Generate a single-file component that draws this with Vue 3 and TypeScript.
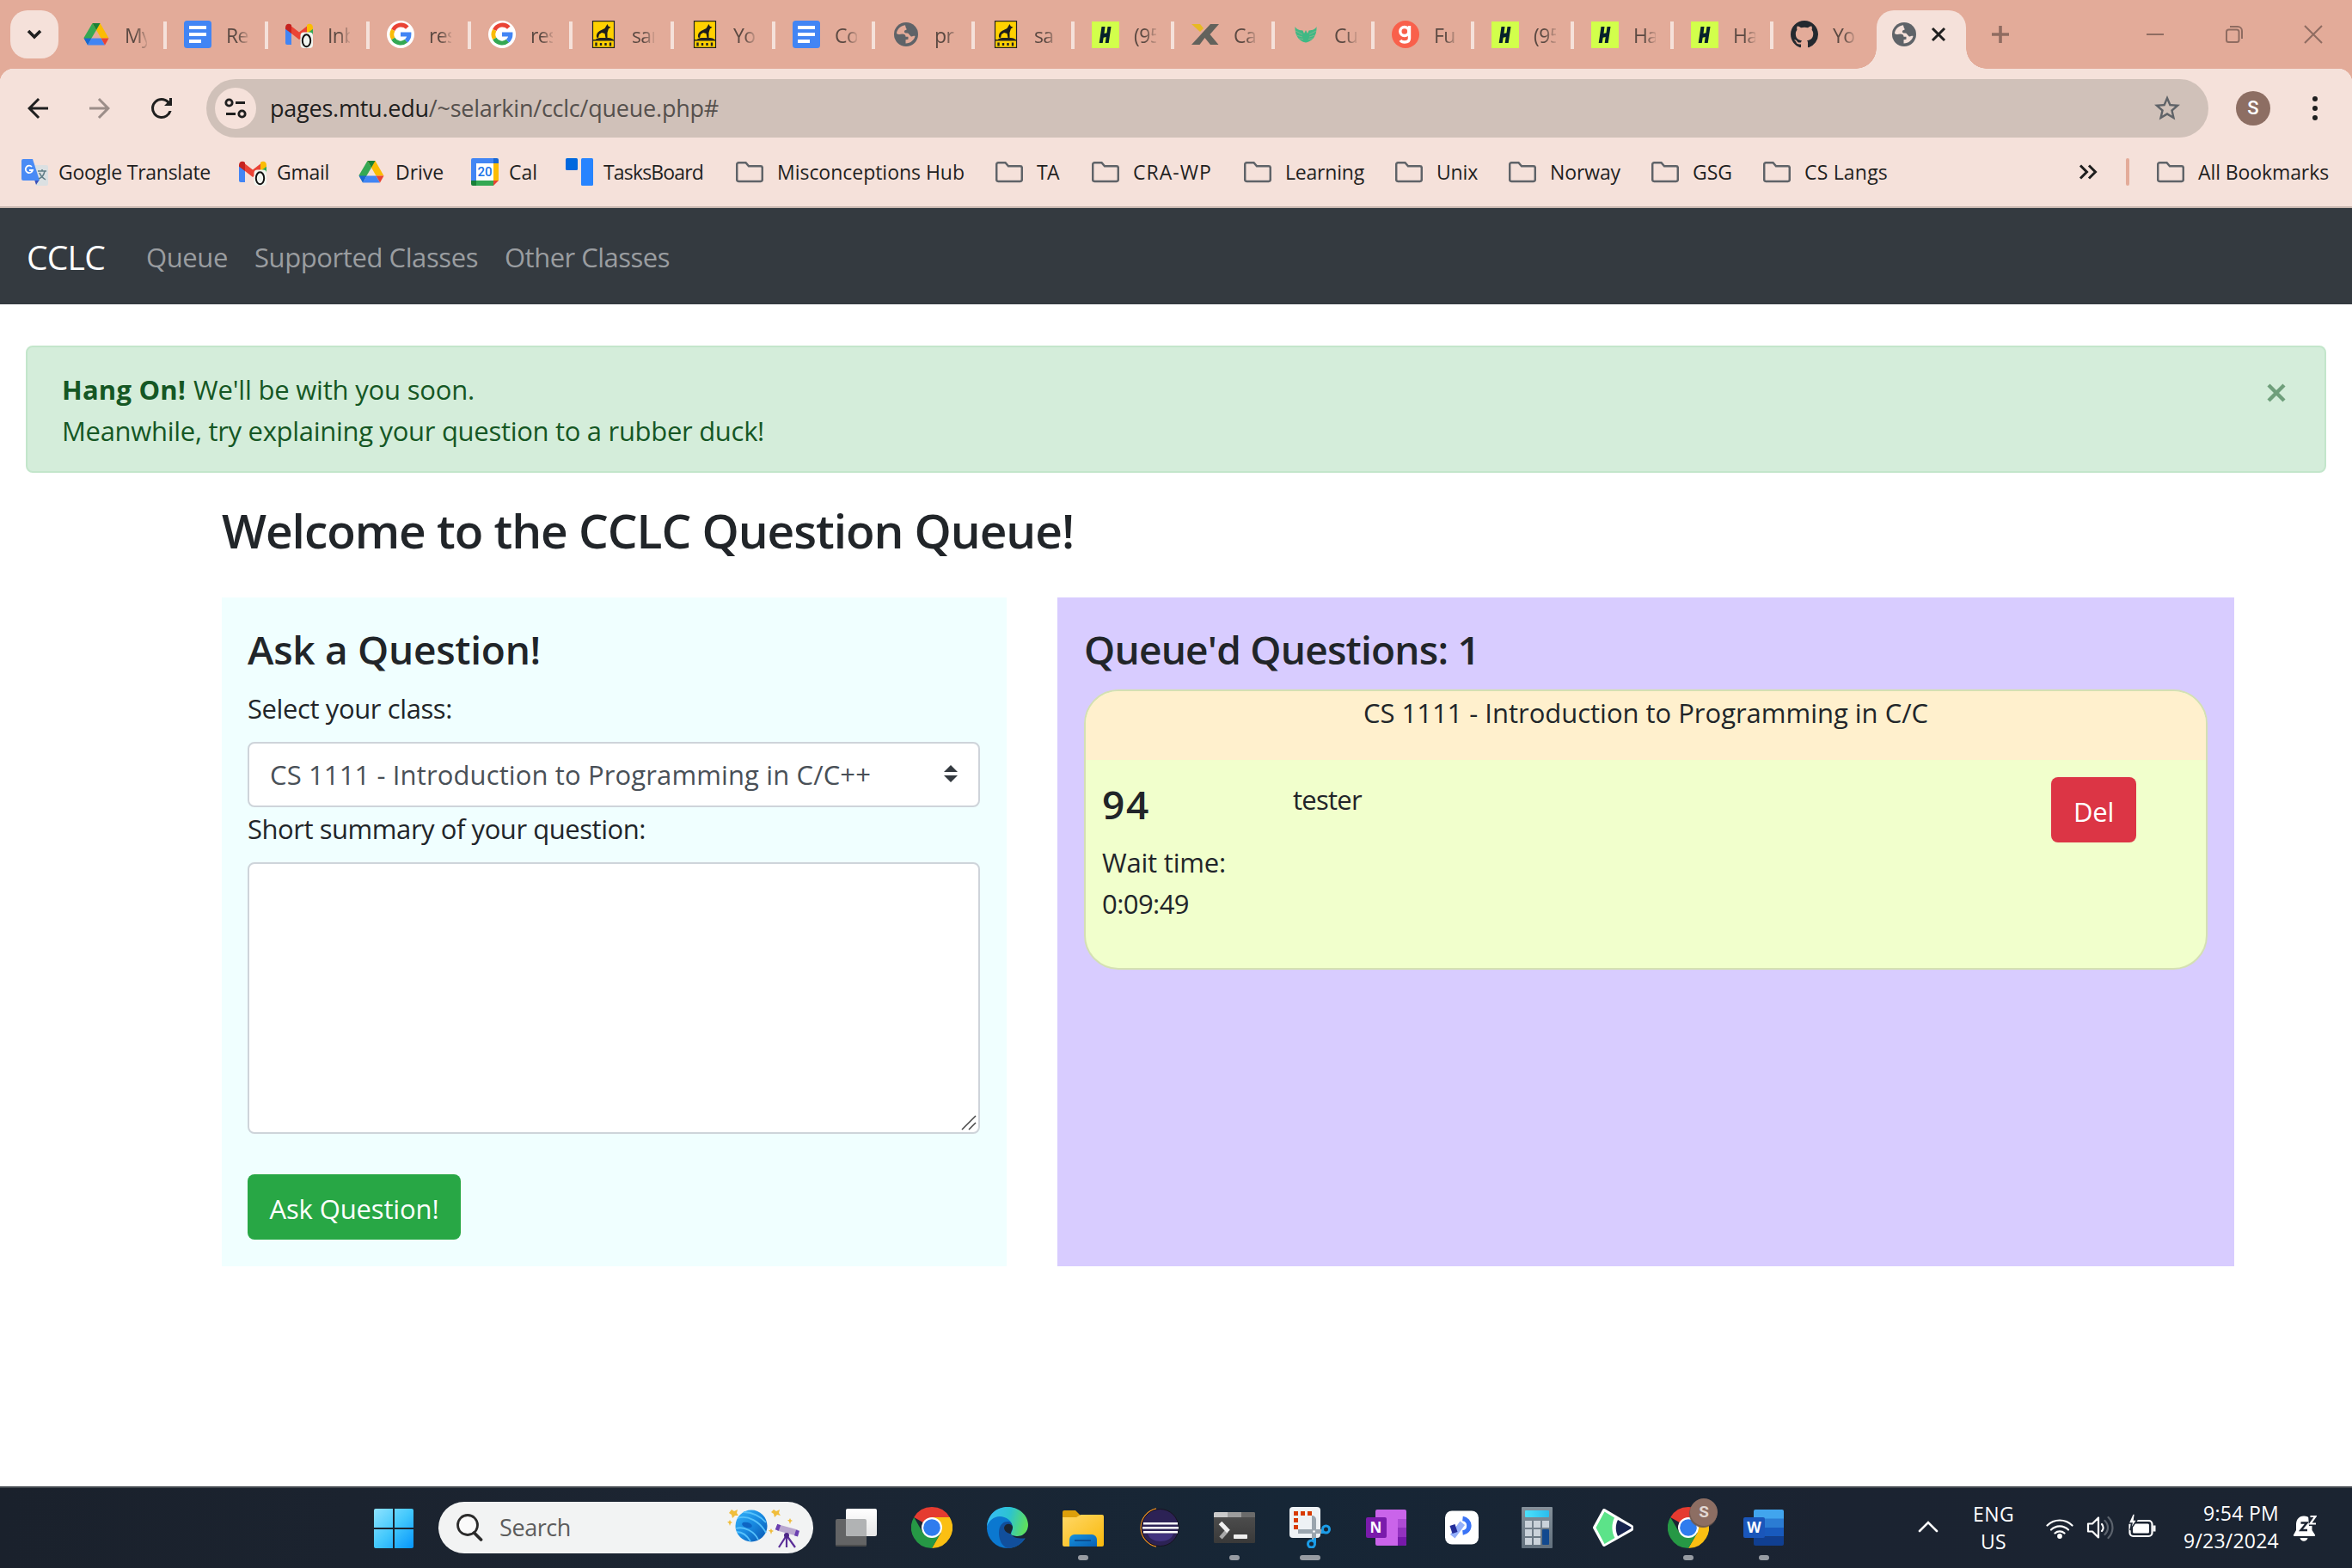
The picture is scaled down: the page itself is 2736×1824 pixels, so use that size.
<script setup lang="ts">
import type { Directive } from 'vue'

interface Tab { icon: string; title: string; width: number }
interface Bookmark { icon: string; label: string; cell: number; text: number }
interface App { icon: string; bar?: number; letter?: string }

// Spreads the letters of a single-line label so that it takes up the given width.
const vFit: Directive<HTMLElement, number> = {
  mounted(el, { value }) {
    const range = document.createRange()
    range.selectNodeContents(el)
    const natural = range.getBoundingClientRect().width
    const count = (el.textContent ?? '').length
    if (count > 0) el.style.letterSpacing = `${((value - natural) / count).toFixed(3)}px`
  },
}

const tabs: Tab[] = [
  { icon: 'drive', title: 'My D', width: 118 },
  { icon: 'docs', title: 'Re', width: 118 },
  { icon: 'gmail', title: 'Inb', width: 118 },
  { icon: 'google', title: 'res', width: 118 },
  { icon: 'google', title: 'res', width: 118 },
  { icon: 'husky', title: 'sam', width: 118 },
  { icon: 'husky', title: 'Yo', width: 118 },
  { icon: 'docs', title: 'Co', width: 116 },
  { icon: 'globe', title: 'pr', width: 116 },
  { icon: 'husky', title: 'sa', width: 116 },
  { icon: 'hand', title: '(95', width: 116 },
  { icon: 'xmark', title: 'Ca', width: 117 },
  { icon: 'wings', title: 'Cu', width: 116 },
  { icon: 'gred', title: 'Fu', width: 116 },
  { icon: 'hand', title: '(95', width: 116 },
  { icon: 'hand', title: 'Ha', width: 116 },
  { icon: 'hand', title: 'Ha', width: 116 },
  { icon: 'github', title: 'Yo', width: 120 },
]

const bookmarks: Bookmark[] = [
  { icon: 'translate', label: 'Google Translate', cell: 254, text: 177 },
  { icon: 'gmail', label: 'Gmail', cell: 138, text: 61 },
  { icon: 'drive', label: 'Drive', cell: 132, text: 56 },
  { icon: 'cal', label: 'Cal', cell: 110, text: 33 },
  { icon: 'tasks', label: 'TasksBoard', cell: 198, text: 116 },
  { icon: 'folder', label: 'Misconceptions Hub', cell: 302, text: 218 },
  { icon: 'folder', label: 'TA', cell: 112, text: 26 },
  { icon: 'folder', label: 'CRA-WP', cell: 177, text: 92 },
  { icon: 'folder', label: 'Learning', cell: 176, text: 92 },
  { icon: 'folder', label: 'Unix', cell: 132, text: 48 },
  { icon: 'folder', label: 'Norway', cell: 166, text: 82 },
  { icon: 'folder', label: 'GSG', cell: 130, text: 46 },
  { icon: 'folder', label: 'CS Langs', cell: 200, text: 97 },
]

const apps: App[] = [
  { icon: 'taskview' },
  { icon: 'chrome' },
  { icon: 'edge' },
  { icon: 'explorer', bar: 12 },
  { icon: 'eclipse' },
  { icon: 'terminal', bar: 12 },
  { icon: 'snip', bar: 24 },
  { icon: 'onenote', letter: 'N' },
  { icon: 'pdapp' },
  { icon: 'calc' },
  { icon: 'clip' },
  { icon: 'chromeS', bar: 12 },
  { icon: 'word', bar: 12, letter: 'W' },
]
</script>

<template>
  <div class="screen">
    <svg class="sprite" width="0" height="0" aria-hidden="true">
      <defs>
        <linearGradient id="gWin" x1="0" y1="0" x2="1" y2="1"><stop offset="0" stop-color="#8fe3ff" /><stop offset=".5" stop-color="#43c8fc" /><stop offset="1" stop-color="#0696fb" /></linearGradient>
        <linearGradient id="gFold" x1="0" y1="0" x2="1" y2="1"><stop offset="0" stop-color="#ffd867" /><stop offset="1" stop-color="#f9b90c" /></linearGradient>
        <linearGradient id="gTab" x1="0" y1="0" x2="1" y2="1"><stop offset="0" stop-color="#1792dd" /><stop offset="1" stop-color="#0860b4" /></linearGradient>
        <linearGradient id="gEdge" x1="0" y1=".4" x2="1" y2=".6"><stop offset="0" stop-color="#37bdf5" /><stop offset=".5" stop-color="#2cc3d0" /><stop offset="1" stop-color="#62e155" /></linearGradient>
        <linearGradient id="gPlanet" x1="0" y1="0" x2="1" y2="1"><stop offset="0" stop-color="#36b4fb" /><stop offset=".5" stop-color="#1889e0" /><stop offset="1" stop-color="#0a55b0" /></linearGradient>
        <linearGradient id="gTerm" x1="0" y1="0" x2="0" y2="1"><stop offset="0" stop-color="#505050" /><stop offset="1" stop-color="#393939" /></linearGradient>
        <linearGradient id="gPaper" x1="0" y1="0" x2="0" y2="1"><stop offset="0" stop-color="#ffffff" /><stop offset="1" stop-color="#e6e6e6" /></linearGradient>
        <linearGradient id="gCalc" x1="0" y1="0" x2="0" y2="1"><stop offset="0" stop-color="#84909a" /><stop offset="1" stop-color="#62707d" /></linearGradient>
        <linearGradient id="gCalcTop" x1="0" y1="0" x2="1" y2="0"><stop offset="0" stop-color="#4be2fc" /><stop offset="1" stop-color="#2bbcec" /></linearGradient>
      </defs>
      <symbol id="i-drive" viewBox="0 0 32 32">
        <path d="M11.500 3 1.500 20 6 28 16 11z" fill="#34a853" />
        <path d="M20.500 3H11.500L21.500 20.500H30.500z" fill="#fbbc04" /><path d="M11.500 3h9L16 11z" fill="#188038" />
        <path d="M1.500 20.500h9L6 28.500z" fill="#1967d2" /><path d="M10.500 20.500h11L26 28.500H6z" fill="#4285f4" /><path d="M21.500 20.500h9L26 28.500z" fill="#ea4335" />
      </symbol>
      <symbol id="i-docs" viewBox="0 0 32 32"><rect width="32" height="32" rx="3.500" fill="#4285f4" /><path d="M6 6h20v4H6zM6 14h20v4H6zM6 22h14v4H6z" fill="#fff" /></symbol>
      <symbol id="i-gmail" viewBox="0 0 32 32">
        <path d="M0 8v18a2 2 0 0 0 2 2h5V13z" fill="#4285f4" /><path d="M25 13v15h5a2 2 0 0 0 2-2V8z" fill="#34a853" />
        <path d="M7 6.500 16 13.500 25 6.500V15L16 22 7 15z" fill="#ea4335" /><path d="M0 8C0 4 4 2.500 7 5V15L0 9.800z" fill="#c5221f" /><path d="M32 8c0-4-4-5.500-7-3V15l7-5.200z" fill="#fbbc04" />
        <rect x="17.500" y="13.500" width="14.500" height="18.500" rx="4" fill="#f1f5ef" /><ellipse cx="24.500" cy="23.300" rx="4.700" ry="7" fill="none" stroke="#111" stroke-width="2" />
      </symbol>
      <symbol id="i-google" viewBox="0 0 32 32">
        <circle cx="16" cy="16" r="16" fill="#fff" />
        <g fill="none" stroke-width="4.800"><path d="M23.800 8.200A10 10 0 0 0 7.300 11" stroke="#ea4335" /><path d="M7.300 11a10 10 0 0 0 0 10" stroke="#fbbc05" /><path d="M7.300 21A10 10 0 0 0 22.500 23.700" stroke="#34a853" /><path d="M22.500 23.700A10 10 0 0 0 26 16H16" stroke="#4285f4" /></g>
      </symbol>
      <symbol id="i-husky" viewBox="0 0 32 32">
        <rect x="3.500" y=".6" width="25" height="30.800" fill="#ffd100" stroke="#222" stroke-width="1.200" />
        <path d="M4 22h24v1.500H4z" fill="#222" /><path d="M7 22c0-1 3-2 6-2h8c3 0 6 1 6 2z" fill="#222" />
        <path d="M8 19.500c-.5-3 .5-6 3.500-7.500l6-3 3-5 1.200 2.500 2.800 1.300-2.600 1.700-1.400 4.500v6h-2l-1-5-3.500-1-3 2-1 4z" fill="#1c1c1c" />
        <path d="M7.500 25.500v4M13 26v3M18.500 26v3M24 25.500v4" fill="none" stroke="#222" stroke-width="2.400" />
      </symbol>
      <symbol id="i-globe" viewBox="0 0 32 32">
        <circle cx="16" cy="16" r="14" fill="#5f6368" />
        <path d="M15 5.200C9 6 5.200 10.500 5 15c2 1.600 4.500 1 6.500.6 2.500 0 4 1 4 3.200h3v3l-3 .5V26.500c6-.2 10-4 11-8.500-2-.8-3 1.200-5 .2l-3-3.500c-1.800-.4-3.500.2-4.500-1.200-.6-1.600.8-2.600 2.400-2.800.8-1.200-.6-2-.8-3z" fill="var(--hole, #e3ab99)" />
      </symbol>
      <symbol id="i-hand" viewBox="0 0 32 32"><rect y="1" width="32" height="31" fill="#d2ff4b" /><path d="M11.500 7h4l-1 8 3-.7 1-7.300h4l-2.800 19h-4l1-7-3 .7-1 6.300h-4z" fill="#06222b" /></symbol>
      <symbol id="i-xmark" viewBox="0 0 32 32"><path d="M22 4h10L21.500 16 31.500 28H22l-6.500-8L9.500 28H0z" fill="#62625c" /><path d="M0 4h10l4 5-4 4z" fill="#e8b923" /></symbol>
      <symbol id="i-wings" viewBox="0 0 32 32"><path d="M3.500 7c2 4 6 4 9 4.500L14 15l2-4 2 4 1.500-3.500c3-.5 7-.5 9-4.500.5 8-3 17-12.500 18.500C6.500 24 3 15 3.500 7z" fill="#3fb984" /><path d="M4 12l8 4M5 17l7 2M8 21l5 .5M28 12l-8 4M27 17l-7 2M24 21l-5 .5" stroke="#8fb592" stroke-width=".8" /></symbol>
      <symbol id="i-gred" viewBox="0 0 32 32"><circle cx="16" cy="16" r="16" fill="#f9604b" /><g fill="none" stroke="#fff" stroke-width="3.400"><circle cx="14.800" cy="12.500" r="5" /><path d="M20.500 6v14.500c0 3.500-2.500 4.500-5.500 4.500-2 0-4-.6-5-2.200" /></g></symbol>
      <symbol id="i-github" viewBox="0 0 16 16"><path fill="#24292f" d="M8 0C3.580 0 0 3.580 0 8c0 3.540 2.290 6.530 5.470 7.590.4.070.55-.17.55-.38 0-.19-.01-.82-.01-1.490-2.010.37-2.530-.49-2.690-.94-.09-.23-.48-.94-.82-1.130-.28-.15-.68-.52-.01-.53.63-.01 1.080.58 1.230.82.72 1.210 1.870.87 2.330.66.070-.52.28-.87.51-1.070-1.780-.2-3.640-.89-3.640-3.950 0-.87.31-1.590.82-2.150-.08-.2-.36-1.020.08-2.120 0 0 .67-.21 2.200.82.64-.18 1.320-.27 2-.27s1.360.09 2 .27c1.530-1.040 2.200-.82 2.200-.82.44 1.100.16 1.920.08 2.120.51.56.82 1.270.82 2.150 0 3.070-1.870 3.750-3.650 3.950.29.25.54.73.54 1.480 0 1.070-.01 1.930-.01 2.200 0 .21.15.46.55.38A8.010 8.010 0 0 0 16 8c0-4.420-3.580-8-8-8z" /></symbol>
      <symbol id="i-translate" viewBox="0 0 32 32">
        <path d="M15 8h15a2 2 0 0 1 2 2v20a2 2 0 0 1-2 2H18z" fill="#dbe0e2" /><path d="M16 25h6l-4 6z" fill="#3a4fb8" />
        <path d="M3 1h11l8 25H3a2 2 0 0 1-2-2V3a2 2 0 0 1 2-2z" fill="#4a8bf5" />
        <path d="M13 10a4.200 4.200 0 1 0 1 4H10" fill="none" stroke="#fff" stroke-width="1.800" /><path d="M20 15h10M25 13v2M28 15c-1 5-4 8-7 9M22 17c1 4 4 6 7 8" fill="none" stroke="#5f7d86" stroke-width="1.500" />
      </symbol>
      <symbol id="i-cal" viewBox="0 0 32 32">
        <path d="M2 0h24v6H6v20H0V2a2 2 0 0 1 2-2z" fill="#4285f4" /><path d="M26 0h4a2 2 0 0 1 2 2v4h-6z" fill="#1967d2" /><path d="M26 6h6v20h-6z" fill="#fbbc04" /><path d="M6 26h20v6H6z" fill="#34a853" /><path d="M0 26h6v6H2a2 2 0 0 1-2-2z" fill="#188038" /><path d="M26 26h6l-6 6z" fill="#ea4335" /><path d="M6 6h20v20H6z" fill="#fff" />
      </symbol>
      <symbol id="i-tasks" viewBox="0 0 32 32"><rect width="14" height="14" rx="1.500" fill="#0068de" /><rect x="18" width="14" height="32" rx="1.500" fill="#2684ff" /></symbol>
      <symbol id="i-folder" viewBox="0 0 32 32"><path d="M3.200 5.300H11.500L15 9.300H28.800a2 2 0 0 1 2 2V25a2 2 0 0 1-2 2H3.200a2 2 0 0 1-2-2V7.300a2 2 0 0 1 2-2z" fill="none" stroke="#5f6368" stroke-width="2.500" /></symbol>

      <symbol id="i-taskview" viewBox="0 0 48 48"><rect x="0" y="14" width="36" height="32" rx="2" fill="#636465" /><path d="M0 44h36v0a2 2 0 0 1-2 2H2a2 2 0 0 1-2-2z" fill="#4b4c4d" /><rect x="12" y="2" width="36" height="32" rx="2" fill="url(#gPaper)" /><path d="M12 14h22a2 2 0 0 1 2 2v18H14a2 2 0 0 1-2-2z" fill="#b1b3b4" /></symbol>
      <symbol id="i-chrome" viewBox="0 0 48 48">
        <path d="M24 0A24 24 0 0 1 44.800 12H24L13.600 18 3.200 12A24 24 0 0 1 24 0z" fill="#e53b30" /><path d="M44.800 12A24 24 0 0 1 24 48L34.400 30V12z" fill="#fbbf12" /><path d="M3.200 12A24 24 0 0 0 24 48L34.400 30 24 30 13.600 30z" fill="#269845" />
        <path d="M24 12H44.800L34.400 30z" fill="#fbbf12" /><circle cx="24" cy="24" r="12" fill="#fff" /><circle cx="24" cy="24" r="9.800" fill="#2f7cee" />
      </symbol>
      <symbol id="i-edge" viewBox="0 0 48 48">
        <circle cx="24" cy="24" r="24" fill="#0b78d0" /><path d="M14 30c0-9 5-13 10-13 3 0 6 2 6 5 0 2-3 5-2 8 2 5 10 7 17 4-4 9-12 14-21 14-6-2-10-9-10-18z" fill="#114f9c" />
        <path d="M0 23C1 9 11 0 24 0c14 0 24 10 24 21 0 8-6 13-12 13-5 0-8-1-8-3 0-1 2-3 2-7 0-8-8-13-15-13C8 11 2 16 0 23z" fill="url(#gEdge)" />
        <path d="M20 24c1-5 8-6 10-1 .5 3-2 5-2 8-4 0-8-3-8-7zM28 31c2 5 9 6 17 5.500L48 32V21c0 8-6 13-12 13-5 0-8-1-8-3z" fill="#1a2431" />
      </symbol>
      <symbol id="i-explorer" viewBox="0 0 48 48"><path d="M0 6a2 2 0 0 1 2-2h13l5 5v8H0z" fill="#dc9f0a" /><path d="M0 12h16l5-3h25a2 2 0 0 1 2 2v33a2 2 0 0 1-2 2H2a2 2 0 0 1-2-2z" fill="url(#gFold)" /><path d="M8 46V38a6 6 0 0 1 6-6h20a6 6 0 0 1 6 6v8z" fill="url(#gTab)" /><path d="M14 39h19" stroke="#0b4f93" stroke-width="2" /></symbol>
      <symbol id="i-eclipse" viewBox="0 0 48 48"><path d="M21 2A22.500 22.500 0 0 0 21 46 22.500 22.500 0 0 1 21 2z" fill="#f7941e" stroke="#f7941e" stroke-width="1.500" /><circle cx="25.500" cy="24" r="21.500" fill="#2c2255" stroke="#17131f" /><path d="M11 31h30c-3 12-27 12-30 0z" fill="#41327e" /><path d="M6 18h40v2.500H6zM5 23h42v2.500H5zM6 28h40v2.500H6z" fill="#fff" /></symbol>
      <symbol id="i-terminal" viewBox="0 0 48 48"><rect y="6" width="48" height="36" rx="1.500" fill="url(#gTerm)" /><path d="M0 12V7.500A1.500 1.500 0 0 1 1.500 6H16v6z" fill="#cacaca" /><path d="M16 6h16v6H16z" fill="#9d9d9d" /><path d="M32 6h14.500A1.500 1.500 0 0 1 48 7.500V12H32z" fill="#6b6b6b" /><path d="m15 28-7 8" stroke="#a8a8a8" stroke-width="4.500" /><path d="m7.500 18.500 9.500 10" stroke="#f0f0f0" stroke-width="5" /><rect x="23" y="32" width="16" height="5" rx=".8" fill="#eee" /></symbol>
      <symbol id="i-snip" viewBox="0 0 48 48"><rect width="36" height="36" rx="4" fill="#eef2f5" /><path d="M5 5h5v5H5zM13 5h5v5h-5zM21 5h5v5h-5zM5 13h5v5H5zM5 21h5v5H5z" fill="#d83b01" /><path d="M26 10c3 0 5 2 5 5v24h-5z" fill="#9aa5ae" /><path d="M10 26v5h30v-5z" fill="#9aa5ae" /><g fill="none" stroke="#1b9de8" stroke-width="3"><circle cx="42.500" cy="26" r="4" /><circle cx="25.500" cy="43" r="4" /><path d="M37 29.500h4M29.500 36v6" /></g><circle cx="28.500" cy="28.500" r="1.300" fill="#fff" /></symbol>
      <symbol id="i-onenote" viewBox="0 0 48 48"><rect x="12" y="3" width="36" height="42" rx="2" fill="#ca64ea" /><path d="M38 14h10v11H38z" fill="#ae4bd5" /><path d="M38 24h10v11H38z" fill="#9332bf" /><path d="M38 35h10v8a2 2 0 0 1-2 2h-8z" fill="#7719aa" /><rect x="1" y="12" width="24" height="24" rx="2" fill="#7a1bab" /></symbol>
      <symbol id="i-pdapp" viewBox="0 0 48 48"><rect x="5" y="4.500" width="39" height="39" rx="8" fill="#fff" /><path d="M22.500 16.500 28 21 16.500 36.500 11 32z" fill="#94b0fb" /><path d="m10.500 22 6-2 3 9-6 2z" fill="#232d9a" /><path d="M25.500 13.500a8.300 8.300 0 0 1 0 16.500" fill="none" stroke="#3a73f6" stroke-width="5.500" /></symbol>
      <symbol id="i-calc" viewBox="0 0 48 48"><rect x="6" width="36" height="48" rx="1" fill="url(#gCalc)" /><rect x="10" y="4" width="28" height="8" rx="1" fill="url(#gCalcTop)" /><path d="M10 16h8v8h-8zM20 16h8v8h-8zM30 16h8v8h-8zM10 26h8v8h-8zM20 26h8v8h-8zM10 36h8v8h-8zM20 36h8v8h-8z" fill="#cad2da" /><rect x="30" y="26" width="8" height="18" rx="1" fill="#12498f" /></symbol>
      <symbol id="i-clip" viewBox="0 0 48 48"><path d="M14 4 46 23v3L14 44 3 24z" fill="#fff" stroke="#fff" stroke-width="4" stroke-linejoin="round" /><path d="M14.500 5.500 26 12.500C22.500 20 22.500 29 26.500 36L14.500 43 4.500 24z" fill="#5ce389" /><path d="M30 15 45.500 23.500v1.500L30 34C27 28 27 21 30 15z" fill="#16234f" /></symbol>
      <symbol id="i-word" viewBox="0 0 48 48"><path d="M12 14V5a2 2 0 0 1 2-2h31a2 2 0 0 1 2 2v9z" fill="#41a5ee" /><path d="M12 13.500h35V24H12z" fill="#2b7cd3" /><path d="M12 24h35v10.500H12z" fill="#185abd" /><path d="M12 34.500h35V43a2 2 0 0 1-2 2H14a2 2 0 0 1-2-2z" fill="#103f91" /><rect y="12" width="25" height="24" rx="2" fill="#1a56ba" /></symbol>
    </svg>

    <header class="strip">
      <div class="tabsearch"><svg width="24" height="24" viewBox="0 0 24 24"><path d="m5 8 7 7 7-7" fill="none" stroke="#1f1f1f" stroke-width="3.600" /></svg></div>
      <div v-for="(t, i) in tabs" :key="i" class="tab" :class="{ last: i === tabs.length - 1 }" :style="{ width: t.width + 'px' }">
        <svg class="ico32"><use :href="'#i-' + t.icon" /></svg>
        <span class="title">{{ t.title }}</span>
      </div>
      <div class="active">
        <svg class="ico32"><use href="#i-globe" /></svg>
        <svg width="18" height="18" viewBox="0 0 18 18"><path d="m2 2 14 14M16 2 2 16" stroke="#1f1f1f" stroke-width="3" /></svg>
      </div>
      <svg class="plus" width="20" height="20" viewBox="0 0 20 20"><path d="M10 0v20M0 10h20" stroke="#8f6c61" stroke-width="3.600" /></svg>
      <div class="controls">
        <svg width="22" height="22" viewBox="0 0 22 22"><path d="M1 11h20" stroke="#8f6c61" stroke-width="2" /></svg>
        <svg width="22" height="22" viewBox="0 0 22 22" fill="none" stroke="#8f6c61" stroke-width="2"><rect x="2" y="5.500" width="14.500" height="14.500" rx="2.500" /><path d="M6 2h9a5 5 0 0 1 5 5v9" /></svg>
        <svg width="22" height="22" viewBox="0 0 22 22"><path d="m1 1 20 20M21 1 1 21" stroke="#8f6c61" stroke-width="2" /></svg>
      </div>
    </header>

    <div class="chrome">
      <div class="toolbar">
        <svg class="nav" viewBox="0 0 24 24"><path fill="#1f1f1f" d="M20 11H7.830l5.590-5.590L12 4l-8 8 8 8 1.410-1.410L7.830 13H20v-2z" /></svg>
        <svg class="nav" viewBox="0 0 24 24"><path fill="#9c8e89" d="m12 4-1.410 1.410L16.170 11H4v2h12.170l-5.580 5.590L12 20l8-8z" /></svg>
        <svg class="nav" viewBox="0 0 24 24"><path fill="#1f1f1f" d="M17.650 6.350A7.960 7.960 0 0 0 12 4a8 8 0 1 0 7.730 10h-2.080A6 6 0 1 1 12 6c1.660 0 3.140.69 4.220 1.780L14 10h6V4h-2v2z" /></svg>
        <div class="omnibox">
          <div class="site"><svg width="26" height="24" viewBox="0 0 26 24" fill="none" stroke="#1f1f1f" stroke-width="2.800"><circle cx="5.500" cy="5.500" r="3.700" /><path d="M13 5.500h11M2 18.500h11" /><circle cx="20.500" cy="18.500" r="3.700" /></svg></div>
          <span v-fit="522" class="url"><b>pages.mtu.edu</b>/~selarkin/cclc/queue.php#</span>
          <svg class="star" viewBox="0 0 24 24"><path fill="#5f6368" d="m22 9.240-7.190-.62L12 2 9.190 8.630 2 9.240l5.460 4.730L5.820 21 12 17.270 18.180 21l-1.630-7.030zM12 15.400l-3.760 2.270 1-4.280-3.320-2.880 4.380-.38L12 6.100l1.710 4.040 4.380.38-3.320 2.880 1 4.280z" /></svg>
        </div>
        <div class="avatar">S</div>
        <svg class="dots" width="8" height="30" viewBox="0 0 8 30" fill="#1f1f1f"><circle cx="4" cy="4" r="3" /><circle cx="4" cy="15" r="3" /><circle cx="4" cy="26" r="3" /></svg>
      </div>
      <div class="bookmarks">
        <div v-for="b in bookmarks" :key="b.label" class="bm" :class="{ dir: b.icon === 'folder' }" :style="{ width: b.cell + 'px' }">
          <svg class="ico32"><use :href="'#i-' + b.icon" /></svg>
          <i v-if="b.icon === 'cal'" class="day">20</i>
          <span v-fit="b.text">{{ b.label }}</span>
        </div>
        <svg class="more" width="22" height="18" viewBox="0 0 22 18" fill="none" stroke="#1f1f1f" stroke-width="3"><path d="m2 1.500 7.500 7.500L2 16.500M12 1.500 19.500 9 12 16.500" /></svg>
        <div class="rule"></div>
        <div class="bm dir all"><svg class="ico32"><use href="#i-folder" /></svg><span v-fit="152">All Bookmarks</span></div>
      </div>
    </div>

    <nav class="navbar">
      <span v-fit="91" class="brand">CCLC</span>
      <span v-fit="95" class="l1">Queue</span>
      <span v-fit="260" class="l2">Supported Classes</span>
      <span v-fit="192" class="l3">Other Classes</span>
    </nav>

    <main>
      <div class="alert">
        <div>
          <div class="line"><strong v-fit="144">Hang On!</strong><span v-fit="327" class="rest">We'll be with you soon.</span></div>
          <div class="line"><span v-fit="817">Meanwhile, try explaining your question to a rubber duck!</span></div>
        </div>
        <svg width="22" height="22" viewBox="0 0 22 22"><path d="m2 2 18 18M20 2 2 20" stroke="#6f9f7b" stroke-width="4.400" /></svg>
      </div>
      <h2><span v-fit="991">Welcome to the CCLC Question Queue!</span></h2>
      <div class="panels">
        <section class="ask">
          <h3><span v-fit="341">Ask a Question!</span></h3>
          <div class="label"><span v-fit="238">Select your class:</span></div>
          <div class="select"><span v-fit="699">CS 1111 - Introduction to Programming in C/C++</span><svg width="16" height="20" viewBox="0 0 16 20" fill="#343a40"><path d="M8 0l8 8H0zM8 20l8-8H0z" /></svg></div>
          <div class="label second"><span v-fit="463">Short summary of your question:</span></div>
          <div class="area"><svg width="18" height="18" viewBox="0 0 18 18"><path d="M1 17 17 1M9 17l8-8" stroke="#444" stroke-width="1.500" /></svg></div>
          <div class="btn green"><span v-fit="197">Ask Question!</span></div>
        </section>
        <section class="queue">
          <h3><span v-fit="460">Queue'd Questions: 1</span></h3>
          <article class="card">
            <div class="cardhead"><span v-fit="657">CS 1111 - Introduction to Programming in C/C</span></div>
            <div class="cardbody">
              <div class="who">
                <div class="num"><span v-fit="56">94</span></div>
                <div class="line"><span v-fit="144">Wait time:</span></div>
                <div class="line"><span v-fit="101">0:09:49</span></div>
              </div>
              <div class="line what"><span v-fit="80">tester</span></div>
              <div class="btn red"><span v-fit="47">Del</span></div>
            </div>
          </article>
        </section>
      </div>
    </main>

    <footer class="taskbar">
      <svg class="start" width="48" height="48" viewBox="0 0 48 48" fill="url(#gWin)"><path d="M1 4a2 2 0 0 1 2-2h20v22H1zM25 2h20a2 2 0 0 1 2 2v20H25zM1 26h22v22H3a2 2 0 0 1-2-2zM25 26h22v20a2 2 0 0 1-2 2H25z" /></svg>
      <div class="search">
        <svg width="32" height="34" viewBox="0 0 32 34"><circle cx="14" cy="14" r="11.500" fill="#fff" fill-opacity=".6" stroke="#2b2b2b" stroke-width="2.800" /><path d="m21.500 23 8 8" stroke="#2b2b2b" stroke-width="3.800" stroke-linecap="round" /></svg>
        <span v-fit="83">Search</span>
        <svg class="space" width="86" height="50" viewBox="0 0 86 50">
          <circle cx="29" cy="21" r="18.500" fill="url(#gPlanet)" /><path d="M13 12c12-4 26 4 33 17M11 24c10-3 22 4 26 13M20 5c10 0 20 5 26 12M12 28c7 0 12 4 16 11" fill="none" stroke="#56c1fb" stroke-width="1.800" /><ellipse cx="24" cy="20" rx="6" ry="3" transform="rotate(15 24 20)" fill="#0e65c4" />
          <g fill="#f0bd3b"><path d="m6 2 3 2 4-2-1 4 2 3-4 0-3 3-1-4-3-2zM55 2l3 2 4-2-1 4 2 3-4-1-3 3-1-4-3-2zM1 16l2 0 1-2 1 2 2 1-2 1-1 3-1-3zM71 14l2 0 1-2 1 2 2 1-2 1-1 3-1-3zM49 26l2 0 1-2 1 2 2 1-2 1-1 3-1-3z" /></g>
          <path d="m60 23 22 6" stroke="#b9a7cf" stroke-width="7" /><path d="m58 22 4 1.500M80 29l4 1.200" stroke="#6a3fb0" stroke-width="7" /><path d="M70 31v15M70 32l-9 14M70 32l10 14" stroke="#5b2f98" stroke-width="2.200" /><circle cx="70" cy="32" r="3" fill="#4c2687" />
        </svg>
      </div>
      <div class="apps">
        <div v-for="a in apps" :key="a.icon" class="app">
          <svg class="ico48"><use :href="'#i-' + (a.icon === 'chromeS' ? 'chrome' : a.icon)" /></svg>
          <i v-if="a.icon === 'chromeS'" class="badge">S</i>
          <i v-if="a.letter" class="letter">{{ a.letter }}</i>
          <i v-if="a.bar" class="bar" :style="{ width: a.bar + 'px' }"></i>
        </div>
      </div>
      <svg class="chev" width="24" height="14" viewBox="0 0 24 14"><path d="m2 12 10-10 10 10" fill="none" stroke="#fff" stroke-width="2.600" stroke-linecap="round" /></svg>
      <div class="lang"><span v-fit="48">ENG</span><span v-fit="30">US</span></div>
      <svg class="wifi" width="32" height="26" viewBox="0 0 32 26" fill="none" stroke="#fff" stroke-width="2.200" stroke-linecap="round"><path d="M1.500 10.500a20.500 20.500 0 0 1 29 0M6 15.500a14 14 0 0 1 20 0M10.500 19.500a8 8 0 0 1 11 0" /><circle cx="16" cy="23" r="1.800" fill="#fff" /></svg>
      <svg class="vol" width="34" height="30" viewBox="0 0 34 30" fill="none" stroke="#fff" stroke-width="2.200" stroke-linejoin="round" stroke-linecap="round"><path d="M2 10.500h5l7-7v23l-7-7H2z" /><path d="M18 11a6 6 0 0 1 0 8" /><path d="M21.500 7a11 11 0 0 1 0 16M25.500 3a17 17 0 0 1 0 24" stroke="#5c636d" /></svg>
      <svg class="bat" width="32" height="30" viewBox="0 0 32 30"><rect x="1.500" y="9" width="26" height="18" rx="4" fill="none" stroke="#fff" stroke-width="2.200" /><rect x="5" y="12.500" width="19" height="11" rx="1.500" fill="#fff" /><path d="M28.500 14.500h3v7h-3z" fill="#fff" /><path d="M5 1 0 12h4l-2 8 8-12H6.500L7.500 1z" fill="#fff" stroke="#1b2331" stroke-width="1.500" /></svg>
      <div class="clock"><span v-fit="88">9:54 PM</span><span v-fit="111">9/23/2024</span></div>
      <svg class="bell" width="28" height="32" viewBox="0 0 28 32"><path d="M13 1.500C7 1.500 4 6 4 11v7l-3 5.500a1 1 0 0 0 1 1.500h23a1 1 0 0 0 1-1.500L22.500 18V11C22.500 6 19 1.500 13 1.500zM8.500 27h9c-1 5-8 5-9 0z" fill="#fff" /><path d="M18 0h10v13H19z" fill="#1b2331" /><path d="M9.500 9.500h7L9.500 18h7.500" fill="none" stroke="#1b2331" stroke-width="2.400" /><path d="M20.500 2h6l-6 8.500h6.500" fill="none" stroke="#fff" stroke-width="2.200" /></svg>
    </footer>
  </div>
</template>

<style>
html, body { margin: 0; background: #fff; }
</style>

<style scoped>
.screen { width: 2736px; height: 1824px; overflow: hidden; display: flex; flex-direction: column; background: #fff; color: #212529; font-family: 'Open Sans', 'Noto Sans', sans-serif; font-stretch: 95%; font-size: 31px; line-height: 48px; }
.screen * { box-sizing: border-box; }
.screen span, .screen strong { white-space: nowrap; }
svg { display: block; flex: none; }
.sprite { position: absolute; }
.ico32 { width: 32px; height: 32px; }
.ico48 { width: 48px; height: 48px; }

.strip { height: 80px; flex: none; background: #e3ab99; display: flex; padding-left: 12px; }
.tabsearch { width: 56px; height: 56px; margin: 12px 8px 0 0; border-radius: 20px; background: #f5e1da; display: flex; align-items: center; justify-content: center; flex: none; }
.tab { height: 32px; margin-top: 25px; flex: none; display: flex; align-items: center; padding-left: 20px; border-right: 4px solid #f5e1da; }
.tab.last { border-color: transparent; }
.tab svg { margin-top: -2px; }
.title { width: 26px; margin-left: 17px; overflow: hidden; font-size: 23px; line-height: 34px; letter-spacing: -.6px; color: #5b4942; -webkit-mask-image: linear-gradient(90deg, #000 50%, transparent 110%); mask-image: linear-gradient(90deg, #000 50%, transparent 110%); }
.active { --hole: #f5e1da; position: relative; width: 104px; height: 68px; margin-top: 12px; flex: none; border-radius: 20px 20px 0 0; background: #f5e1da; display: flex; align-items: center; gap: 15px; padding: 0 0 12px 16px; }
.active::before, .active::after { content: ''; position: absolute; bottom: 0; width: 24px; height: 24px; }
.active::before { left: -24px; background: radial-gradient(circle at 0 0, transparent 23.5px, #f5e1da 24px); }
.active::after { right: -24px; background: radial-gradient(circle at 100% 0, transparent 23.5px, #f5e1da 24px); }
.plus { margin: 30px 0 0 30px; }
.controls { margin: 29px 34px 0 auto; display: flex; gap: 70px; }

.chrome { height: 162px; flex: none; border-bottom: 2px solid #c8b7b0; background: radial-gradient(circle at 16px 16px, #f5e1da 16px, #e3ab99 16.5px) 0 0 / 16px 16px no-repeat, radial-gradient(circle at 0 16px, #f5e1da 16px, #e3ab99 16.5px) 100% 0 / 16px 16px no-repeat, #f5e1da; }
.toolbar { height: 80px; padding: 12px 0 0 26px; display: flex; align-items: center; }
.nav { width: 36px; height: 36px; margin-right: 36px; }
.nav:nth-child(3) { margin-right: 34px; }
.omnibox { width: 2329px; height: 68px; border-radius: 34px; background: #d0c1b9; display: flex; align-items: center; padding: 0 30px 0 10px; }
.site { width: 48px; height: 48px; border-radius: 50%; background: #f5e1da; display: flex; align-items: center; justify-content: center; }
.url { margin-left: 16px; font-size: 27px; color: #55504d; line-height: 40px; }
.url b { font-weight: 400; color: #1f1f1f; }
.star { width: 36px; height: 36px; margin-left: auto; }
.avatar { width: 40px; height: 40px; margin-left: 32px; border-radius: 50%; background: #8d6e63; color: #fff; font: 500 22px/40px Roboto, sans-serif; text-align: center; }
.dots { margin-left: 48px; }
.bookmarks { height: 80px; padding-left: 24px; display: flex; align-items: center; font-size: 23px; line-height: 34px; color: #1f1f1f; }
.bm { position: relative; display: flex; align-items: center; gap: 12px; flex: none; }
.bm.dir { gap: 16px; }
.day { position: absolute; left: 0; top: 1px; width: 32px; text-align: center; color: #1a73e8; font: 500 15px/32px Roboto, sans-serif; }
.more { margin-left: 167px; }
.rule { width: 4px; height: 32px; border-radius: 2px; background: #e3ab99; margin: 0 32px 0 33px; }

.navbar { height: 112px; flex: none; background: #343a40; color: #9a9da0; display: flex; align-items: center; padding: 1px 0 0 31px; }
.brand { width: 91px; font-size: 39px; color: #fff; }
.l1 { width: 94px; margin-left: 48px; }
.l2 { width: 258px; margin-left: 32px; }
.l3 { margin-left: 33px; }

main { flex: 1; padding: 48px 30px 0; }
.alert { height: 148px; border: 2px solid #c3e6cb; border-radius: 8px; background: #d4edda; color: #155724; padding: 25px 45px 0 40px; display: flex; justify-content: space-between; }
.alert svg { margin-top: 17px; }
.line { height: 48px; display: flex; }
.rest { margin-left: 9px; }
h2, h3 { margin: 0; font-weight: 600; }
h2 { margin: 34px 0 45px 228px; font-size: 55px; line-height: 66px; height: 66px; }
h3 { font-size: 46px; line-height: 58px; height: 58px; }
.panels { display: flex; gap: 59px; margin-left: 228px; }
.ask, .queue { height: 778px; padding: 31px 31px 0 30px; }
.ask { width: 913px; background: #f0ffff; }
.queue { width: 1369px; background: #d8ccff; padding-left: 31px; }
.label { height: 48px; margin: 16px 0 15px; }
.label.second { margin: 1px 0 15px; }
.select { height: 76px; border: 2px solid #ced4da; border-radius: 8px; background: #fff; color: #495057; display: flex; align-items: center; justify-content: space-between; padding: 0 24px; }
.select svg { margin-top: -2px; }
.area { height: 316px; border: 2px solid #ced4da; border-radius: 8px; background: #fff; display: flex; align-items: flex-end; justify-content: flex-end; padding: 0 2px 2px; }
.btn { height: 76px; border-radius: 8px; color: #fff; display: flex; align-items: center; justify-content: center; padding-top: 3px; }
.green { width: 248px; margin-top: 47px; background: #28a745; }
.red { width: 99px; margin: 0 81px 0 auto; background: #dc3545; }
.card { height: 326px; margin-top: 18px; border: 2px solid #d4e0b3; border-radius: 40px; background: #f1ffcc; overflow: hidden; }
.cardhead { height: 80px; padding-top: 1px; background: #fff0cd; text-align: center; }
.cardbody { display: flex; padding: 20px 0 0 19px; }
.who { width: 222px; padding-top: 2px; }
.num { height: 58px; margin-bottom: 15px; font-size: 46px; line-height: 58px; font-weight: 600; }
.what { padding-top: 2px; }

.taskbar { height: 95px; flex: none; border-top: 2px solid #42484e; background: linear-gradient(90deg, #1a212c 0, #1c2532 30%, #162636 55%, #1b2331 78%, #1b2431 100%); display: flex; padding-left: 434px; color: #fff; font-size: 23px; line-height: 32px; }
.start { margin-top: 22px; }
.search { width: 436px; height: 60px; margin: 16px 26px 0 28px; border-radius: 30px; background: #f2f3f3; color: #5c5c5c; display: flex; align-items: center; padding-left: 20px; font-size: 27px; }
.search span { width: 83px; margin-left: 19px; }
.space { margin: 4px 0 0 181px; }
.apps { display: flex; gap: 40px; margin-top: 22px; }
.app { position: relative; width: 48px; height: 72px; }
.bar { position: absolute; left: 24px; top: 56px; height: 6px; border-radius: 3px; background: #969ba2; transform: translateX(-50%); }
.badge { position: absolute; left: 26px; top: -10px; width: 32px; height: 32px; border-radius: 50%; background: #8d6e63; box-shadow: -1px 2px 1px #6e5950; color: #e2d7d2; font: 700 19px/32px Roboto, sans-serif; text-align: center; }
.letter { position: absolute; left: 0; top: 12px; width: 25px; font: 700 17px/24px 'Open Sans', sans-serif; text-align: center; }
.chev { margin: 38px 0 0 155px; }
.lang { width: 64px; margin: 14px 0 0 32px; display: flex; flex-direction: column; align-items: center; }
.wifi { margin: 33px 0 0 29px; }
.vol { margin: 31px 0 0 15px; }
.bat { margin: 29px 0 0 15px; }
.clock { width: 119px; margin: 13px 0 0 24px; display: flex; flex-direction: column; align-items: flex-end; }
.bell { margin: 31px 0 0 16px; }
</style>
